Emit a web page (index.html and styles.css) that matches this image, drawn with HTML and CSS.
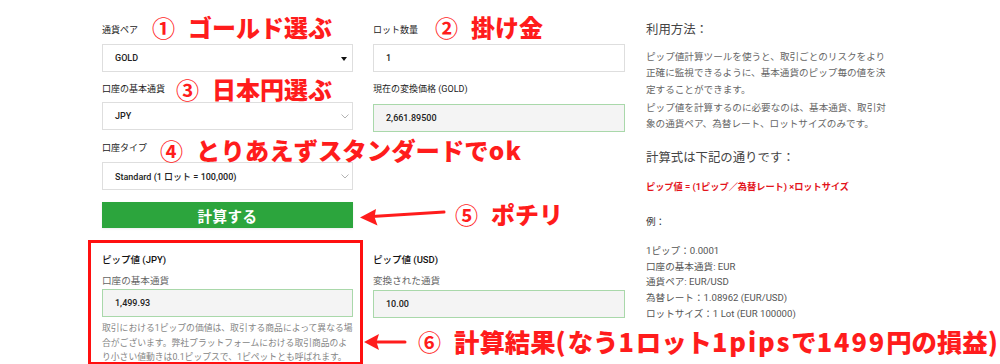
FILE: index.html
```html
<!DOCTYPE html>
<html lang="ja">
<head>
<meta charset="utf-8">
<title>ピップ値計算ツール</title>
<link rel="stylesheet" href="styles.css">
</head>
<body>
<div class="page">
  <div class="calc">
    <div class="field">
      <div class="label">通貨ペア</div>
      <div class="box select">GOLD<span class="tri"></span></div>
    </div>
    <div class="field">
      <div class="label">ロット数量</div>
      <div class="box">1</div>
    </div>
    <div class="field row2">
      <div class="label">口座の基本通貨</div>
      <div class="box select">JPY<svg class="chev" width="8" height="5" viewBox="0 0 8 5"><polyline points="0.5,0.5 4,4 7.5,0.5" fill="none" stroke="#aaa" stroke-width="0.9"/></svg></div>
    </div>
    <div class="field row2 wide-gap">
      <div class="label">現在の変換価格 (GOLD)</div>
      <div class="box ro">2,661.89500</div>
    </div>
    <div class="field row3">
      <div class="label">口座タイプ</div>
      <div class="box select">Standard (1 ロット = 100,000)<svg class="chev" width="8" height="5" viewBox="0 0 8 5"><polyline points="0.5,0.5 4,4 7.5,0.5" fill="none" stroke="#aaa" stroke-width="0.9"/></svg></div>
    </div>
    <button class="calc-btn">計算する</button>
    <div class="result res-left">
      <div class="res-title">ピップ値 (JPY)</div>
      <div class="res-sub">口座の基本通貨</div>
      <div class="box ro res-box">1,499.93</div>
      <p class="res-note">取引における1ピップの価値は、取引する商品によって異なる場<br>合がございます。弊社プラットフォームにおける取引商品のよ<br>り小さい値動きは0.1ピップスで、1ピペットとも呼ばれます。</p>
    </div>
    <div class="result">
      <div class="res-title">ピップ値 (USD)</div>
      <div class="res-sub">変換された通貨</div>
      <div class="box ro res-box res-box-mid">10.00</div>
    </div>
  </div>

  <aside class="info">
    <h2 class="info-h">利用方法：</h2>
    <p class="info-p first">ピップ値計算ツールを使うと、取引ごとのリスクをより<br>正確に監視できるように、基本通貨のピップ毎の値を決<br>定することができます。</p>
    <p class="info-p">ピップ値を計算するのに必要なのは、基本通貨、取引対<br>象の通貨ペア、為替レート、ロットサイズのみです。</p>
    <h2 class="info-h second">計算式は下記の通りです：</h2>
    <p class="formula">ピップ値 = (1ピップ／為替レート) ×ロットサイズ</p>
    <p class="example">例：</p>
    <ul class="ex-list">
      <li>1ピップ：0.0001</li>
      <li>口座の基本通貨: EUR</li>
      <li>通貨ペア: EUR/USD</li>
      <li>為替レート：1.08962 (EUR/USD)</li>
      <li>ロットサイズ：1 Lot (EUR 100000)</li>
    </ul>
  </aside>

  <div class="red-frame"></div>

  <div class="anno a1"><span class="num">①</span><span>ゴールド選ぶ</span></div>
  <div class="anno a2"><span class="num">②</span><span>掛け金</span></div>
  <div class="anno a3"><span class="num">③</span><span>日本円選ぶ</span></div>
  <div class="anno a4"><span class="num">④</span><span>とりあえずスタンダードで<span class="lat">ok</span></span></div>
  <div class="anno a5"><span class="num">⑤</span><span>ポチリ</span></div>
  <div class="anno a6"><span class="num">⑥</span><span>計算結果<span class="lat">(</span>なう<span class="lat">1</span>ロット<span class="lat">1pips</span>で<span class="lat">1499</span>円の損益<span class="lat">)</span></span></div>

  <svg class="arrows" width="1000" height="364" viewBox="0 0 1000 364">
    <line x1="444" y1="212" x2="372" y2="216.5" stroke="#ff1c1c" stroke-width="3" stroke-linecap="round"/>
    <polygon points="360,217.5 376,209 374.5,217 377.5,225.5" fill="#ff1c1c"/>
    <line x1="405" y1="342" x2="375" y2="342" stroke="#ff1c1c" stroke-width="3" stroke-linecap="round"/>
    <polygon points="364,342 379,334 376.5,342 379,350" fill="#ff1c1c"/>
  </svg>
</div>
</body>
</html>
```

FILE: styles.css
```css
html, body {
  margin: 0;
  padding: 0;
  background: #ffffff;
}

body {
  font-family: "Roboto", "Noto Sans CJK JP", sans-serif;
  color: #222;
}

.page {
  position: relative;
  width: 1000px;
  height: 364px;
  overflow: hidden;
  box-sizing: border-box;
  padding: 23px 0 0 102px;
  display: flex;
  gap: 21px;
}

/* ---------- calculator form ---------- */
.calc {
  display: grid;
  grid-template-columns: 251px 252px;
  column-gap: 20px;
  align-content: start;
}

.field .label {
  font-size: 9px;
  line-height: 14px;
  color: #222;
  margin-bottom: 7px;
}

.row2 { margin-top: 10px; }
.row2 .label { margin-bottom: 6px; }
.row2.wide-gap .label { margin-bottom: 8px; }

.row3 { margin-top: 9px; grid-column: 1; }

.box {
  position: relative;
  height: 28px;
  box-sizing: border-box;
  border: 1px solid #dedede;
  background: #fff;
  display: flex;
  align-items: center;
  padding: 0 12px;
  font-size: 9px;
  font-weight: 500;
  color: #222;
}

.box.ro {
  background: #f4f4f4;
  border-color: #a9d8aa;
}

.tri {
  position: absolute;
  right: 5px;
  top: 12px;
  width: 0;
  height: 0;
  border-left: 3px solid transparent;
  border-right: 3px solid transparent;
  border-top: 4px solid #111;
}

.chev {
  position: absolute;
  right: 3px;
  top: 11px;
}

.calc-btn {
  grid-column: 1;
  margin-top: 12px;
  height: 26px;
  border: none;
  background: #2ca53d;
  color: #fff;
  font-family: "Noto Sans CJK JP", sans-serif;
  font-weight: 700;
  font-size: 14.5px;
  letter-spacing: 0.5px;
  padding: 0;
  box-shadow: 0 1px 2px rgba(0,0,0,0.08);
}

.result {
  margin-top: 25px;
}

.res-left { grid-column: 1; }

.res-title {
  font-size: 9.5px;
  font-weight: 500;
  line-height: 14px;
  color: #111;
}

.res-sub {
  margin-top: 7px;
  font-size: 9.6px;
  line-height: 14px;
  color: #666;
}

.res-box {
  margin-top: 1px;
}

.res-box-mid {
  margin-top: 2px;
}

.res-note {
  margin: 4px 0 0;
  font-size: 8.8px;
  line-height: 14.5px;
  color: #858585;
  white-space: nowrap;
}

/* ---------- info column ---------- */
.info {
  width: 330px;
  color: #666;
}

.info-h {
  margin: -1px 0 0;
  font-size: 12.4px;
  font-weight: 400;
  line-height: 16px;
  color: #444;
}

.info-h.second {
  margin-top: 17px;
}

.info-p {
  margin: 1.3px 0 0;
  font-size: 9.6px;
  line-height: 16.6px;
  color: #666;
  white-space: nowrap;
}

.info-p.first {
  margin-top: 10.6px;
}

.formula {
  margin: 14px 0 0;
  font-size: 9.2px;
  font-weight: 700;
  line-height: 14px;
  color: #e3131b;
}

.example {
  margin: 21px 0 0;
  font-size: 9.6px;
  line-height: 14px;
  color: #333;
}

.ex-list {
  list-style: none;
  margin: 14px 0 0;
  padding: 0;
  font-size: 9.6px;
  line-height: 15.8px;
  color: #555;
}

/* ---------- annotations (overlay) ---------- */
.red-frame {
  position: absolute;
  left: 88px;
  top: 240px;
  width: 275px;
  height: 125px;
  box-sizing: border-box;
  border: 3px solid #ff1010;
}

.anno {
  position: absolute;
  display: flex;
  align-items: center;
  gap: 13px;
  color: #ff1c1c;
  font-family: "Noto Sans CJK JP", sans-serif;
  font-weight: 900;
  font-size: 24px;
  line-height: 24px;
  white-space: nowrap;
}

.anno .num {
  font-weight: 700;
  font-size: 23px;
}

.anno .lat {
  letter-spacing: 1.3px;
}

.a1 { left: 152px; top: 15px; }
.a2 { left: 435px; top: 15px; }
.a3 { left: 176px; top: 77px; }
.a4 { left: 160px; top: 138px; font-size: 24.4px; }
.a5 { left: 455px; top: 202px; }
.a6 { left: 418px; top: 329px; font-size: 25.4px; }
.a6 .num { font-size: 23px; }
.a6 .lat { letter-spacing: 1.9px; }

.arrows {
  position: absolute;
  left: 0;
  top: 0;
  pointer-events: none;
}
```
